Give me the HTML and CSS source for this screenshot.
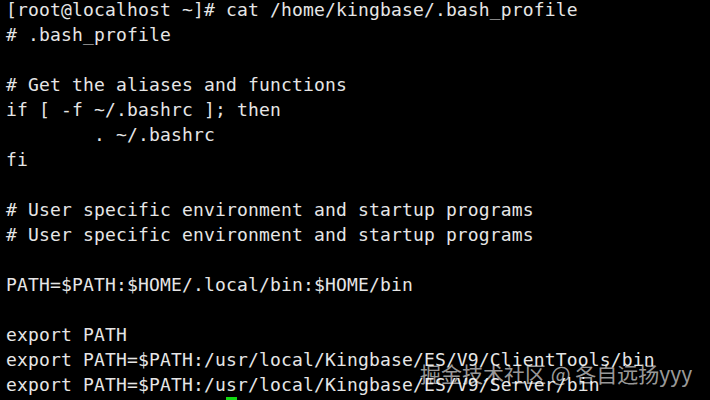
FILE: index.html
```html
<!DOCTYPE html>
<html>
<head>
<meta charset="utf-8">
<link rel="stylesheet" href="styles.css">
</head>
<body>
<div class="term">
<pre class="screen">[root@localhost ~]# cat /home/kingbase/.bash_profile
# .bash_profile

# Get the aliases and functions
if [ -f ~/.bashrc ]; then
        . ~/.bashrc
fi

# User specific environment and startup programs
# User specific environment and startup programs

PATH=$PATH:$HOME/.local/bin:$HOME/bin

export PATH
export PATH=$PATH:/usr/local/Kingbase/ES/V9/ClientTools/bin
export PATH=$PATH:/usr/local/Kingbase/ES/V9/Server/bin
<span class="prompt">                    </span><span class="cursor"> </span></pre>
<div class="watermark">掘金技术社区 @ 各自远扬yyy</div>
</div>
</body>
</html>
```

FILE: styles.css
```css
html, body {
  margin: 0;
  padding: 0;
  background: #000;
  width: 710px;
  height: 400px;
  overflow: hidden;
}
.term {
  position: relative;
  width: 710px;
  height: 400px;
  overflow: hidden;
  background: #000;
}
.screen {
  margin: 0;
  padding: 0 0 0 6px;
  position: relative;
  top: -3px;
  font-family: "DejaVu Sans Mono", monospace;
  font-size: 18px;
  letter-spacing: 0.16px;
  line-height: 25px;
  color: #e6e6e6;
}
.cursor {
  display: inline-block;
  width: 11px;
  height: 25px;
  vertical-align: top;
  background: #12d812;
}
.watermark {
  position: absolute;
  left: 420px;
  top: 362px;
  font-family: "Noto Sans CJK SC", "Noto Sans", sans-serif;
  font-size: 21px;
  line-height: 23px;
  color: rgba(255, 255, 255, 0.62);
  white-space: nowrap;
}
```
